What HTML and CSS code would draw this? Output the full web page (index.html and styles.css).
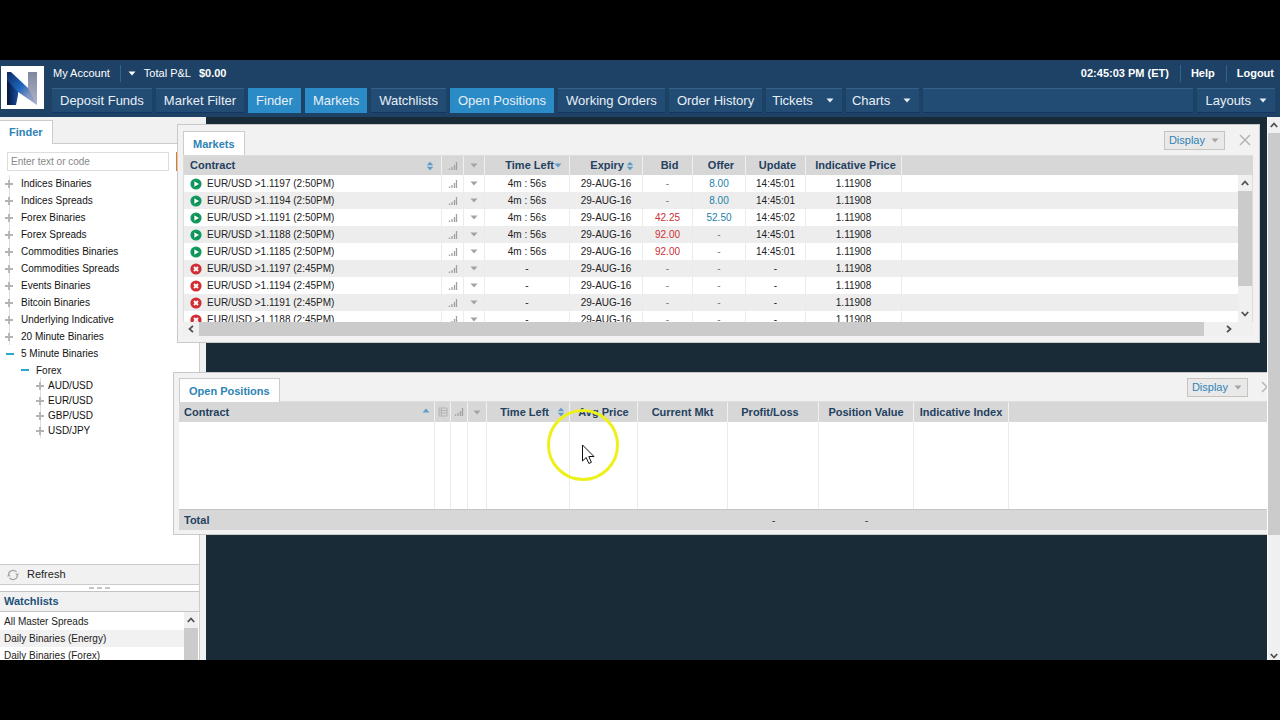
FILE: index.html
```html
<!DOCTYPE html>
<html lang="en">
<head>
<meta charset="utf-8">
<title>Trading Platform</title>
<link rel="stylesheet" href="styles.css">
</head>
<body>
<svg class="defs" width="0" height="0" aria-hidden="true">
  <symbol id="i-open" viewBox="0 0 12 12"><circle cx="6" cy="6" r="5.6" fill="#119b60"/><circle cx="6" cy="6" r="3.3" fill="#0b8a53"/><path d="M4.3 3.2v5.6L9 6z" fill="#fff"/></symbol>
  <symbol id="i-shut" viewBox="0 0 12 12"><circle cx="6" cy="6" r="5.6" fill="#cf2e35"/><path d="M4 4l4 4M8 4l-4 4" stroke="#fff" stroke-width="1.8"/></symbol>
  <symbol id="i-bars" viewBox="0 0 10 10"><path d="M1.500 9V7.500M4 9V6M6.500 9V4M8.500 9V1" stroke="#a0a0a0" stroke-width="1.3"/></symbol>
  <symbol id="i-down" viewBox="0 0 8 5"><path d="M.5.5h7L4 4.500z" fill="currentColor"/></symbol>
  <symbol id="i-up" viewBox="0 0 8 5"><path d="M.5 4.500h7L4 .5z" fill="currentColor"/></symbol>
  <symbol id="i-sort" viewBox="0 0 8 10"><path d="M.7 4.300h6.600L4 .8zM.7 5.700h6.600L4 9.200z" fill="#5c9ec9"/></symbol>
  <symbol id="i-x" viewBox="0 0 12 12"><path d="M1 1l10 10M11 1L1 11" stroke="#b4b4b4" stroke-width="1.5"/></symbol>
  <symbol id="i-list" viewBox="0 0 10 10"><path d="M1 1h8v8H1zM1 3.500h8M1 6h8M3.500 1v8" fill="none" stroke="#b4b4b4"/></symbol>
  <symbol id="i-plus" viewBox="0 0 10 10"><path d="M5 1v8M1 5h8" stroke="#b3b3b3" stroke-width="1.8"/></symbol>
  <symbol id="i-minus" viewBox="0 0 10 10"><path d="M1 5h8" stroke="#27a9cf" stroke-width="2"/></symbol>
  <symbol id="a-up" viewBox="0 0 8 8"><path d="M.8 6L4 2.500 7.200 6" fill="none" stroke="#505050" stroke-width="1.8"/></symbol>
  <symbol id="a-down" viewBox="0 0 8 8"><path d="M.8 2L4 5.500 7.200 2" fill="none" stroke="#505050" stroke-width="1.8"/></symbol>
  <symbol id="a-left" viewBox="0 0 8 8"><path d="M6 .8L2.500 4 6 7.200" fill="none" stroke="#505050" stroke-width="1.8"/></symbol>
  <symbol id="a-right" viewBox="0 0 8 8"><path d="M2 .8L5.500 4 2 7.200" fill="none" stroke="#505050" stroke-width="1.8"/></symbol>
</svg>

<div class="app">
  <header class="top">
    <svg class="logo" viewBox="0 0 43 43" role="img" aria-label="N">
      <defs>
        <linearGradient id="ga" x1="0" y1="0" x2="1" y2="1"><stop offset="0" stop-color="#0c2a60"/><stop offset=".45" stop-color="#1d66bb"/><stop offset=".7" stop-color="#7d92c0"/><stop offset="1" stop-color="#a9b0cd"/></linearGradient>
        <linearGradient id="gb" x1="0" y1="0" x2="0" y2="1"><stop offset="0" stop-color="#8088a0"/><stop offset="1" stop-color="#b0b5c9"/></linearGradient>
        <linearGradient id="gc" x1="0" y1="0" x2="1" y2="0"><stop offset="0" stop-color="#06153c"/><stop offset="1" stop-color="#17509f"/></linearGradient>
      </defs>
      <path fill="#fff" d="M0 0h43v43H0z"/>
      <path fill="url(#gb)" d="M27 6h9v33l-9-9z"/>
      <path fill="url(#gc)" d="M6 6l11 10v13l-2 10H6z"/>
      <path fill="url(#ga)" d="M6 6h4l17 16 9 17-19-13L6 14z"/>
    </svg>
    <div class="bars">
      <div class="account">
        <a href="#">My Account</a>
        <span class="pl"><svg class="caret"><use href="#i-down"/></svg>Total P&amp;L <b>$0.00</b></span>
        <b class="clock">02:45:03 PM (ET)</b>
        <a class="strong" href="#">Help</a>
        <a class="strong" href="#">Logout</a>
      </div>
      <nav class="nav">
        <button>Deposit Funds</button>
        <button>Market Filter</button>
        <button class="on">Finder</button>
        <button class="on">Markets</button>
        <button>Watchlists</button>
        <button class="on">Open Positions</button>
        <button>Working Orders</button>
        <button>Order History</button>
        <button class="drop">Tickets<svg class="caret"><use href="#i-down"/></svg></button>
        <button class="drop">Charts<svg class="caret"><use href="#i-down"/></svg></button>
        <span class="blank"></span>
        <button class="layouts">Layouts<svg class="caret"><use href="#i-down"/></svg></button>
      </nav>
    </div>
  </header>

  <main class="main">
    <div class="desktop">
      <aside class="side">
        <div class="side-tabs"><button class="tab">Finder</button></div>
        <div class="side-body">
          <form class="search">
            <input type="text" placeholder="Enter text or code" aria-label="Enter text or code">
            <button type="button" aria-label="Search"></button>
          </form>
          <ul class="tree">
            <li><svg><use href="#i-plus"/></svg>Indices Binaries</li>
            <li><svg><use href="#i-plus"/></svg>Indices Spreads</li>
            <li><svg><use href="#i-plus"/></svg>Forex Binaries</li>
            <li><svg><use href="#i-plus"/></svg>Forex Spreads</li>
            <li><svg><use href="#i-plus"/></svg>Commodities Binaries</li>
            <li><svg><use href="#i-plus"/></svg>Commodities Spreads</li>
            <li><svg><use href="#i-plus"/></svg>Events Binaries</li>
            <li><svg><use href="#i-plus"/></svg>Bitcoin Binaries</li>
            <li><svg><use href="#i-plus"/></svg>Underlying Indicative</li>
            <li><svg><use href="#i-plus"/></svg>20 Minute Binaries</li>
            <li class="open"><svg><use href="#i-minus"/></svg>5 Minute Binaries</li>
            <li class="open sub"><svg><use href="#i-minus"/></svg>Forex</li>
            <li class="leaf"><svg><use href="#i-plus"/></svg>AUD/USD</li>
            <li class="leaf"><svg><use href="#i-plus"/></svg>EUR/USD</li>
            <li class="leaf"><svg><use href="#i-plus"/></svg>GBP/USD</li>
            <li class="leaf"><svg><use href="#i-plus"/></svg>USD/JPY</li>
          </ul>
          <button class="refresh"><svg viewBox="0 0 12 12"><path d="M1.500 5.500A4.500 4.500 0 0 1 9.500 3.200M10.500 6.500A4.500 4.500 0 0 1 2.500 8.800" fill="none" stroke="#a5a5a5" stroke-width="1.3"/><path d="M12 4.500L10.300 7.200 8.300 4.800zM0 7.500l1.700-2.700 2 2.400z" fill="#a5a5a5"/></svg>Refresh</button>
          <div class="grip"><i></i><i></i><i></i></div>
          <h2>Watchlists</h2>
          <div class="watch">
            <ul>
              <li>All Master Spreads</li>
              <li>Daily Binaries (Energy)</li>
              <li>Daily Binaries (Forex)</li>
            </ul>
            <div class="vbar"><svg><use href="#a-up"/></svg><i></i></div>
          </div>
        </div>
      </aside>

      <section class="win markets">
        <div class="win-head">
          <button class="tab">Markets</button>
          <button class="display">Display<svg class="caret"><use href="#i-down"/></svg></button>
          <button class="close" aria-label="Close"><svg><use href="#i-x"/></svg></button>
        </div>
        <div class="view">
          <table>
            <colgroup><col class="w258"><col class="w22"><col class="w21"><col class="w85"><col class="w73"><col class="w50"><col class="w53"><col class="w60"><col class="w96"><col></colgroup>
            <thead><tr>
              <th><div class="first">Contract<svg class="sort"><use href="#i-sort"/></svg></div></th>
              <th><svg class="sig"><use href="#i-bars"/></svg></th>
              <th><svg class="caret"><use href="#i-down"/></svg></th>
              <th><div class="end">Time Left<svg class="caret blue"><use href="#i-down"/></svg></div></th>
              <th><div class="end gap">Expiry<svg class="sort"><use href="#i-sort"/></svg></div></th>
              <th class="n">Bid</th><th class="n">Offer</th><th class="n">Update</th><th class="n">Indicative Price</th><th></th>
            </tr></thead>
            <tbody id="rows"></tbody>
          </table>
          <div class="vbar"><svg><use href="#a-up"/></svg><i></i><svg><use href="#a-down"/></svg></div>
        </div>
        <div class="hbar"><svg><use href="#a-left"/></svg><i></i><svg><use href="#a-right"/></svg></div>
      </section>

      <section class="win positions">
        <div class="win-head">
          <button class="tab">Open Positions</button>
          <button class="display">Display<svg class="caret"><use href="#i-down"/></svg></button>
          <button class="close" aria-label="Close"><svg><use href="#i-x"/></svg></button>
        </div>
        <table>
          <colgroup><col class="w256"><col class="w16"><col class="w17"><col class="w19"><col class="w83"><col class="w68"><col class="w90"><col class="w91"><col class="w95"><col class="w95"><col></colgroup>
          <thead><tr>
            <th><div class="first">Contract<svg class="caret blue"><use href="#i-up"/></svg></div></th>
            <th><svg class="sig"><use href="#i-list"/></svg></th>
            <th><svg class="sig"><use href="#i-bars"/></svg></th>
            <th><svg class="caret"><use href="#i-down"/></svg></th>
            <th><div class="time">Time Left<svg class="sort"><use href="#i-sort"/></svg></div></th>
            <th>Avg Price</th><th>Current Mkt</th><th class="pl-col">Profit/Loss</th><th>Position Value</th><th>Indicative Index</th><th></th>
          </tr></thead>
          <tbody><tr><td></td><td></td><td></td><td></td><td></td><td></td><td></td><td></td><td></td><td></td><td></td></tr></tbody>
          <tfoot><tr><th class="total" scope="row">Total</th><td colspan="6"></td><td>-</td><td>-</td><td></td><td></td></tr></tfoot>
        </table>
      </section>

      <svg class="pointer" viewBox="0 0 74 74" aria-hidden="true">
        <circle cx="37" cy="37" r="34.500" fill="none" stroke="#eef01c" stroke-width="3"/>
        <path d="M36.500 37v16l3.700-3.500 2.700 6 2.500-1.200-2.600-5.800h5.200z" fill="#fff" stroke="#111" stroke-width="1"/>
      </svg>
    </div>
    <div class="vbar page"><svg><use href="#a-up"/></svg><i></i><svg><use href="#a-down"/></svg></div>
  </main>
</div>
<script src="script.js"></script>
</body>
</html>
```
FILE: script.js
```js
const rows = [
  ["open", "1.1197 (2:50PM)", "4m : 56s", "-", "8.00", "14:45:01"],
  ["open", "1.1194 (2:50PM)", "4m : 56s", "-", "8.00", "14:45:01"],
  ["open", "1.1191 (2:50PM)", "4m : 56s", "42.25", "52.50", "14:45:02"],
  ["open", "1.1188 (2:50PM)", "4m : 56s", "92.00", "-", "14:45:01"],
  ["open", "1.1185 (2:50PM)", "4m : 56s", "92.00", "-", "14:45:01"],
  ["shut", "1.1197 (2:45PM)", "-", "-", "-", "-"],
  ["shut", "1.1194 (2:45PM)", "-", "-", "-", "-"],
  ["shut", "1.1191 (2:45PM)", "-", "-", "-", "-"],
  ["shut", "1.1188 (2:45PM)", "-", "-", "-", "-"]
];
document.getElementById("rows").innerHTML = rows.map(([state, name, left, bid, offer, time]) => `
  <tr>
    <td><div class="contract"><svg><use href="#i-${state}"/></svg>EUR/USD &gt;${name}</div></td>
    <td><svg class="sig"><use href="#i-bars"/></svg></td>
    <td><svg class="caret"><use href="#i-down"/></svg></td>
    <td>${left}</td><td>29-AUG-16</td>
    <td class="${bid === "-" ? "none" : "bid"}">${bid}</td><td class="${offer === "-" ? "none" : "offer"}">${offer}</td>
    <td>${time}</td><td>1.11908</td><td></td>
  </tr>`).join("");
```
FILE: styles.css
```css
* { box-sizing: border-box; }
body {
  margin: 0;
  background: #000;
  font: 10px/17px "Liberation Sans", Arial, sans-serif;
  color: #222;
}
button, input { font: inherit; margin: 0; }
button { border: 0; padding: 0; background: none; cursor: pointer; }
ul { list-style: none; margin: 0; padding: 0; }
svg { display: block; flex: none; }
.defs { position: absolute; }
.app { display: flex; flex-direction: column; height: 100vh; padding: 60px 0; }

.top { display: flex; gap: 8px; height: 57px; flex: none; padding-right: 5px; background: #1d4266; color: #fff; }
.logo { width: 43px; height: 43px; margin: 6px 0 0 1px; }
.bars { flex: 1; }
.account { display: flex; align-items: center; height: 28px; padding: 0 1px 2px; font-size: 11px; }
.account a { color: #fff; text-decoration: none; }
.account b, .account .strong { font-weight: bold; }
.account .pl { display: flex; align-items: center; gap: 8px; margin-left: 10px; border-left: 1px solid #2b6690; padding-left: 7px; }
.account .clock { margin-left: auto; }
.account .strong { margin-left: 11px; border-left: 1px solid #2b6690; padding-left: 10px; }
.caret { width: 8px; height: 5px; }
.nav { display: flex; gap: 4px; height: 25px; }
.nav button, .blank { background: #224c74; border-top: 1px solid #35618a; border-bottom: 1px solid #123663; color: #e8eff6; font-size: 13px; line-height: 23px; padding: 0 8px; white-space: nowrap; }
.nav button.on { background: #2a8bc7; border-color: #2a8bc7; }
.nav .drop { display: flex; align-items: center; gap: 13px; padding: 0 8px 0 6px; }
.nav .layouts { display: flex; align-items: center; gap: 8px; }
.blank { flex: 1; }

.main { display: flex; flex: 1; min-height: 0; }
.desktop { position: relative; flex: 1; overflow: hidden; background: #1a2b38; }

.side { display: flex; flex-direction: column; width: 206px; height: 100%; background: #f1f1f1; }
.side-tabs { display: flex; height: 27px; padding-top: 3px; border-bottom: 1px solid #ccc; }
.tab { height: 24px; border: 1px solid #ccc; border-bottom: 0; padding: 0 9px; background: #fff; color: #2e83b5; font-size: 11px; font-weight: bold; }
.side-tabs .tab { border-left: 0; }
.side-body { display: flex; flex-direction: column; flex: 1; min-height: 0; width: 200px; background: #fff; border-right: 1px solid #ccc; }
.search { display: flex; gap: 7px; padding: 8px 0 0 7px; }
.search input { width: 162px; height: 19px; border: 1px solid #ddd; padding: 0 3px; color: #333; }
.search input::placeholder { color: #888; opacity: 1; }
.search button { flex: 1; background: #e77a20; }
.tree { flex: 1; min-height: 0; overflow: hidden; padding-top: 4px; color: #111; }
.tree li { display: flex; align-items: center; gap: 7px; height: 17px; padding-left: 4px; background: linear-gradient(#ddd, #ddd) 9px 0 / 1px 100% no-repeat; }
.tree svg { width: 10px; height: 10px; }
.tree .open { padding-left: 5px; gap: 6px; background: none; }
.tree .sub { height: 16px; padding-left: 20px; }
.tree .leaf { height: 15px; padding-left: 35px; gap: 3px; background-position: 40px 0; }
.refresh { display: flex; align-items: center; gap: 8px; height: 21px; flex: none; padding-left: 7px; border: 1px solid #ccc; border-width: 1px 0; background: #f1f1f1; font-size: 11px; color: #222; }
.refresh svg { width: 12px; height: 12px; }
.grip { display: flex; justify-content: center; align-items: center; gap: 3px; height: 6px; flex: none; }
.grip i { width: 5px; height: 2px; background: #c4c4c4; }
h2 { margin: 0; height: 21px; flex: none; padding-left: 4px; border: 1px solid #c4c4c4; border-width: 1px 0; background: #f1f1f1; color: #1e5279; font-size: 11px; line-height: 19px; }
.watch { display: flex; height: 48px; flex: none; overflow: hidden; }
.watch ul { flex: 1; padding-top: 1px; }
.watch li { height: 17px; padding-left: 4px; }
.watch li:nth-child(even) { background: #f1f1f1; }

.vbar { display: flex; flex-direction: column; align-items: center; width: 14px; background: #f0f0f0; }
.vbar svg, .hbar svg { width: 8px; height: 8px; margin: 4px 0; }
.vbar i { width: 100%; background: #cbcbcb; }
.watch .vbar { margin-right: 1px; }
.watch .vbar i { flex: 1; }
.page { width: 13px; border-left: 1px solid #fff; }
.page i { flex: 0 1 74%; }
.page svg:last-child { margin: auto 0 0; }

.win { position: absolute; border: 1px solid #c9c9c9; background: #f2f2f2; }
.markets { top: 7px; left: 177px; right: 7px; padding: 6px 6px 6px 5px; }
.positions { top: 255px; left: 173px; right: -12px; padding: 5px 0 4px 5px; }
.win-head { display: flex; align-items: flex-start; height: 25px; border-bottom: 1px solid #ddd; }
.win-head .tab { height: 24px; line-height: 22px; }
.display { display: flex; align-items: center; gap: 6px; height: 19px; margin-left: auto; padding: 0 5px 0 4px; border: 1px solid #c8c4bd; background: #e9e9e9; color: #2e83b5; font-size: 11px; line-height: 17px; }
.display .caret, td .caret, th .caret { color: #a3a3a3; }
.close { width: 12px; height: 12px; margin: 3px 2px 0 14px; }
.close svg { width: 12px; height: 12px; }
.positions .win-head { height: 24px; }
.positions .close { margin: 3px 5px 0 13px; }

table { width: 100%; table-layout: fixed; border-spacing: 0; }
th, td { padding: 0; text-align: center; white-space: nowrap; overflow: hidden; }
thead th { height: 19px; background: #d7d7d7; border-right: 1px solid #f0f0f0; color: #24415f; font-size: 11px; line-height: 17px; }
thead th:last-child { border-right: 0; }
td { height: 17px; border-right: 1px solid #ebebeb; }
td:last-child { border-right: 0; }
th svg, td svg { margin: 0 auto; }
.sig { width: 10px; height: 10px; }
.sort { width: 8px; height: 10px; }
.first { display: flex; justify-content: space-between; align-items: center; padding: 0 7px 0 5px; }
.first svg, .time svg, .end svg, .contract svg { margin: 0; }
.first .caret { margin: 0 -3px 4px 0; }
.markets { --edge: 1px; }
.markets .first { padding-left: 6px; }
.markets th.n { padding-left: 4px; }
.end { display: flex; justify-content: flex-end; align-items: center; padding-right: 7px; }
.gap { gap: 2px; padding-right: 8px; }
thead .blue { color: #5c9ec9; }
.time { display: flex; justify-content: flex-end; align-items: center; gap: 8px; padding-right: 4px; }
.view { position: relative; height: 166px; overflow: hidden; border-left: 1px solid #ddd; }
.view table { padding-right: 0; }
.view tbody tr:nth-child(even) { background: #ededed; }
.view tbody { background: #fff; }
.view .vbar { position: absolute; top: 19px; right: 0; bottom: 0; width: 15px; border-right: 1px solid #ddd; }
.view .vbar i { flex: 0 1 95px; }
.view .vbar svg:last-child { margin: auto 0 4px; }
.contract { display: flex; align-items: center; gap: 5px; padding-left: 6px; }
.contract svg { width: 12px; height: 12px; }
.bid { color: #cc2f35; }
.offer { color: #2480a8; }
.none { color: #777; }
.hbar { display: flex; align-items: center; height: 14px; padding: 0 20px 0 4px; background: #f0f0f0; }
.hbar i { flex: 1; height: 14px; margin: 0 21px 0 4px; background: #cbcbcb; }
.positions thead th { height: 20px; }
.positions tbody td { height: 87px; background: #fff; }
.positions thead .pl-col { padding-right: 6px; }
.positions tfoot td, .total { height: 21px; border-top: 1px solid #c4c4c4; border-right: 0; background: #d7d7d7; color: #24415f; font-size: 11px; }
.total { padding-left: 5px; text-align: left; }
.w16 { width: 16px; } .w17 { width: 17px; } .w19 { width: 19px; } .w21 { width: 21px; } .w22 { width: 22px; }
.w50 { width: 50px; } .w53 { width: 53px; } .w60 { width: 60px; } .w68 { width: 68px; } .w73 { width: 73px; }
.w83 { width: 83px; } .w85 { width: 85px; } .w90 { width: 90px; } .w91 { width: 91px; } .w95 { width: 95px; }
.w96 { width: 96px; } .w256 { width: 256px; } .w258 { width: 258px; }

.pointer { position: absolute; top: 291px; left: 546px; width: 74px; height: 74px; pointer-events: none; }
```
